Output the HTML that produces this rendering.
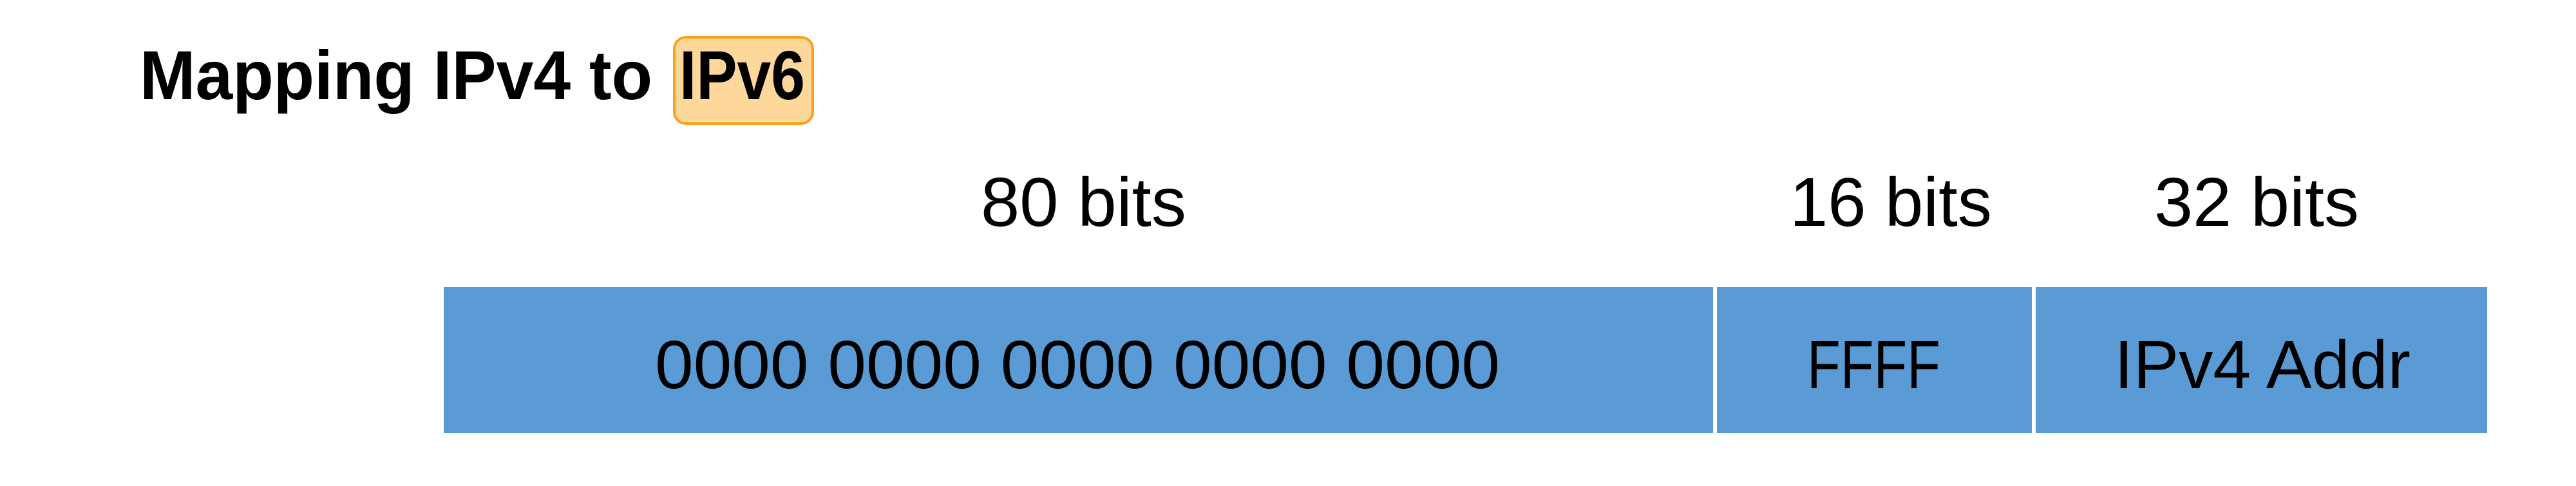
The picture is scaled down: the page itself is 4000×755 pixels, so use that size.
<!DOCTYPE html>
<html><head><meta charset="utf-8"><style>
html,body{margin:0;padding:0;background:#fff;width:4000px;height:755px;overflow:hidden}
</style></head><body>
<svg width="4000" height="755" xmlns="http://www.w3.org/2000/svg" style="display:block">
<rect x="0" y="0" width="4000" height="755" fill="#fff"/>
<rect x="1047" y="58" width="215" height="134" rx="18" ry="18" fill="#fed89b" stroke="#f7a21b" stroke-width="4"/>
<g font-family="Liberation Sans, sans-serif" font-weight="bold" font-size="108" fill="#000">
<text x="217" y="154" textLength="796" lengthAdjust="spacingAndGlyphs">Mapping IPv4 to</text>
<text x="1055" y="154" textLength="195" lengthAdjust="spacingAndGlyphs">IPv6</text>
</g>
<g font-family="Liberation Sans, sans-serif" font-size="108" fill="#000">
<text x="1523" y="351" textLength="319" lengthAdjust="spacingAndGlyphs">80 bits</text>
<text x="2779" y="351" textLength="314" lengthAdjust="spacingAndGlyphs">16 bits</text>
<text x="3345" y="351" textLength="318" lengthAdjust="spacingAndGlyphs">32 bits</text>
</g>
<rect x="689" y="446" width="3173" height="227" fill="#5b9bd5"/>
<rect x="2660" y="446" width="6" height="227" fill="#fff"/>
<rect x="3155" y="446" width="6" height="227" fill="#fff"/>
<g font-family="Liberation Sans, sans-serif" font-size="106" fill="#000">
<text x="1017" y="603" textLength="1312" lengthAdjust="spacingAndGlyphs">0000 0000 0000 0000 0000</text>
<text x="2806" y="603" textLength="207" lengthAdjust="spacingAndGlyphs">FFFF</text>
<text x="3283" y="603" textLength="460" lengthAdjust="spacingAndGlyphs">IPv4 Addr</text>
</g>
</svg>
</body></html>
